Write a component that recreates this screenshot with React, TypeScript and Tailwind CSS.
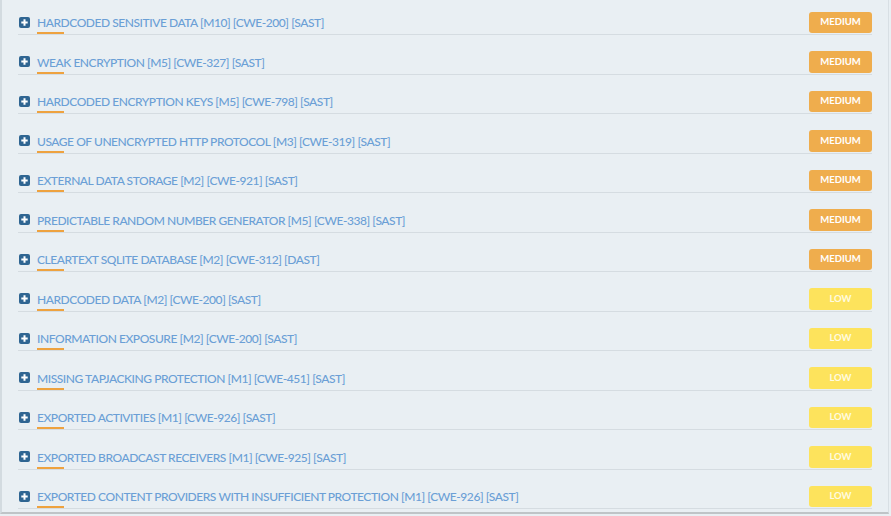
const findings = [
  { title: "HARDCODED SENSITIVE DATA [M10] [CWE-200] [SAST]", level: "MEDIUM" },
  { title: "WEAK ENCRYPTION [M5] [CWE-327] [SAST]", level: "MEDIUM" },
  { title: "HARDCODED ENCRYPTION KEYS [M5] [CWE-798] [SAST]", level: "MEDIUM" },
  { title: "USAGE OF UNENCRYPTED HTTP PROTOCOL [M3] [CWE-319] [SAST]", level: "MEDIUM" },
  { title: "EXTERNAL DATA STORAGE [M2] [CWE-921] [SAST]", level: "MEDIUM" },
  { title: "PREDICTABLE RANDOM NUMBER GENERATOR [M5] [CWE-338] [SAST]", level: "MEDIUM" },
  { title: "CLEARTEXT SQLITE DATABASE [M2] [CWE-312] [DAST]", level: "MEDIUM" },
  { title: "HARDCODED DATA [M2] [CWE-200] [SAST]", level: "LOW" },
  { title: "INFORMATION EXPOSURE [M2] [CWE-200] [SAST]", level: "LOW" },
  { title: "MISSING TAPJACKING PROTECTION [M1] [CWE-451] [SAST]", level: "LOW" },
  { title: "EXPORTED ACTIVITIES [M1] [CWE-926] [SAST]", level: "LOW" },
  { title: "EXPORTED BROADCAST RECEIVERS [M1] [CWE-925] [SAST]", level: "LOW" },
  { title: "EXPORTED CONTENT PROVIDERS WITH INSUFFICIENT PROTECTION [M1] [CWE-926] [SAST]", level: "LOW" },
];

function PlusIcon() {
  return (
    <svg width="11" height="11" viewBox="0 0 11 11" className="shrink-0">
      <rect x="0" y="0" width="11" height="11" rx="2" fill="#2f6592" />
      <path d="M5.5 2.3v6.4M2.3 5.5h6.4" stroke="#fff" strokeWidth="2" />
    </svg>
  );
}

function Badge({ level }: { level: string }) {
  const medium = level === "MEDIUM";
  return (
    <span
      className={
        medium
          ? "flex h-[21.5px] w-[63px] shrink-0 items-center justify-center rounded-[3px] bg-[#efad4d] text-[9.5px] font-bold text-white"
          : "flex h-[21.5px] w-[63px] shrink-0 items-center justify-center rounded-[3px] bg-[#fde35c] text-[9.5px] font-bold text-[#fffbe0]"
      }
    >
      {level}
    </span>
  );
}

export default function App() {
  return (
    <div className="h-[516px] w-[891px] overflow-hidden bg-[#e9eff3] font-['Lato','Open_Sans',sans-serif]">
      <div className="h-[514px] w-[889px] border-b-2 border-l-2 border-r border-b-[#bfc4c7] border-l-[#d3dbe0] border-r-[#d8dfe4] pl-[16px] pr-[16px] pt-[11.7px]">
        <div className="flex flex-col gap-[16px]">
          {findings.map((f) => (
            <div key={f.title} className="relative flex h-[23.5px] items-start border-b border-[#d5dce1] pb-[1px]">
              <div className="flex h-[21.5px] flex-1 items-center gap-[7px] pl-[1px]">
                <PlusIcon />
                <span className="pt-[2px] text-[12px] font-medium tracking-[-0.45px] text-[#6b9fd6]">{f.title}</span>
              </div>
              <Badge level={f.level} />
              <span className="absolute bottom-[0px] left-[19px] h-[2px] w-[27px] bg-[#eea23f]" />
            </div>
          ))}
        </div>
      </div>
    </div>
  );
}
